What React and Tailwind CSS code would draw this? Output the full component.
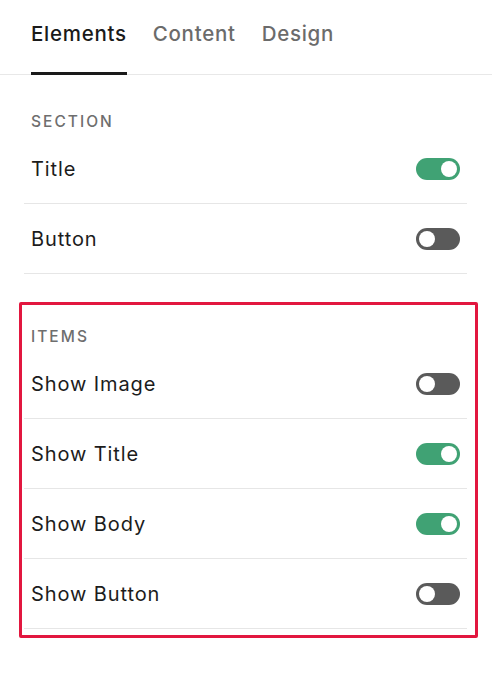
import { useState } from "react";

const FONT = { fontFamily: "Inter, 'Noto Sans', sans-serif" };

function Toggle({ on, onChange }) {
  return (
    <button
      type="button"
      onClick={onChange}
      className={`relative w-[44px] h-[22px] rounded-full shrink-0 ${on ? "bg-[#40a274]" : "bg-[#5a5a5a]"}`}
    >
      <span
        className={`absolute top-[3px] w-[16px] h-[16px] rounded-full bg-white ${on ? "left-[25px]" : "left-[3px]"}`}
      />
    </button>
  );
}

function Row({ label, on, onToggle }) {
  return (
    <div className="h-[70px] flex items-center justify-between pl-[7px] pr-[7px] border-b border-[#e6e6e6]">
      <span className="text-[20px] tracking-[0.045em] text-[#1c1c1c]">{label}</span>
      <Toggle on={on} onChange={onToggle} />
    </div>
  );
}

function Heading({ children }) {
  return (
    <div className="h-[20px] flex items-center pl-[7px] text-[15.5px] font-medium tracking-[0.13em] text-[#6e6e6e]">
      {children}
    </div>
  );
}

export default function App() {
  const [tab, setTab] = useState("Elements");
  const [vals, setVals] = useState({
    title: true,
    button: false,
    image: false,
    itemTitle: true,
    body: true,
    itemButton: false,
  });
  const flip = (k) => setVals((v) => ({ ...v, [k]: !v[k] }));

  return (
    <div className="w-[492px] min-h-[700px] bg-white" style={FONT}>
      {/* tabs */}
      <div className="h-[75px] flex items-stretch gap-[26px] pl-[31px] border-b border-[#e8e8e8]">
        {["Elements", "Content", "Design"].map((t) => (
          <button
            key={t}
            onClick={() => setTab(t)}
            className={`-mb-px pb-[4px] flex items-center text-[20.5px] font-medium tracking-[0.035em] border-b-[3px] ${
              tab === t ? "text-[#1a1a1a] border-[#1a1a1a]" : "text-[#6b6b6b] border-transparent"
            }`}
          >
            {t}
          </button>
        ))}
      </div>

      <div className="px-[24px] pr-[25px] pt-[37px]">
        <Heading>SECTION</Heading>
        <div className="mt-[2px]">
          <Row label="Title" on={vals.title} onToggle={() => flip("title")} />
          <Row label="Button" on={vals.button} onToggle={() => flip("button")} />
        </div>
      </div>

      <div className="mt-[28px] ml-[19px] w-[459px] border-[3px] border-[#e2173f] rounded-[2px] pl-[2px] pr-[8px] pt-[22px] pb-[6px]">
        <Heading>ITEMS</Heading>
        <div className="mt-[2px]">
          <Row label="Show Image" on={vals.image} onToggle={() => flip("image")} />
          <Row label="Show Title" on={vals.itemTitle} onToggle={() => flip("itemTitle")} />
          <Row label="Show Body" on={vals.body} onToggle={() => flip("body")} />
          <Row label="Show Button" on={vals.itemButton} onToggle={() => flip("itemButton")} />
        </div>
      </div>
    </div>
  );
}
